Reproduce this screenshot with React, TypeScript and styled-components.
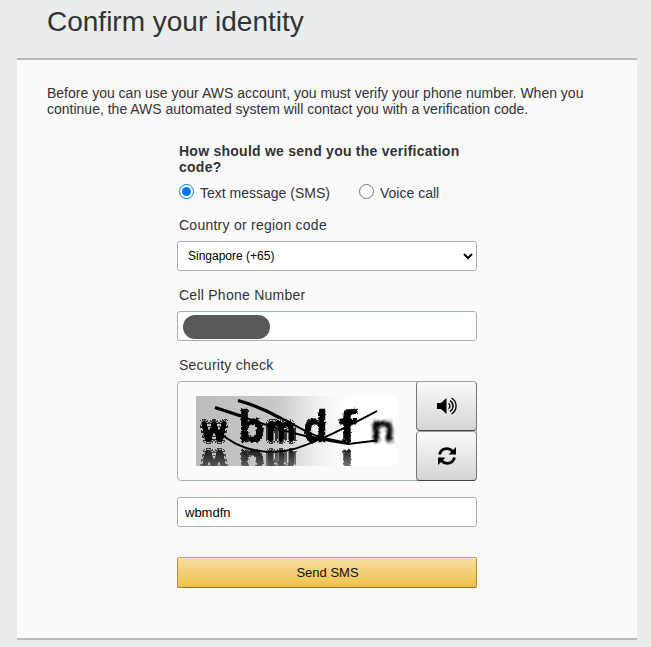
import React, { useState } from "react";
import styled, { createGlobalStyle, css } from "styled-components";

const GlobalStyle = createGlobalStyle`
  *, *::before, *::after { box-sizing: border-box; }
  body {
    margin: 0;
    background: #e9eded;
    color: #333;
    font-family: "Liberation Sans", Arial, Helvetica, sans-serif;
    font-size: 14px;
    line-height: 16px;
  }
`;

const Page = styled.main`
  height: 647px;
  overflow: hidden;
  padding: 0 14px 0 17px;
`;

const Title = styled.h1`
  height: 58px;
  margin: 0;
  padding: 5px 0 0 30px;
  font-size: 28px;
  line-height: 34px;
  font-weight: 400;
`;

const Panel = styled.section`
  height: 582px;
  padding: 25px 30px 0;
  background: #fafafa;
  border-top: 2px solid #b9b9b9;
  border-bottom: 2px solid #b9b9b9;
`;

const Intro = styled.p`
  margin: 0;
  white-space: nowrap;
`;

const Form = styled.form`
  display: flex;
  flex-direction: column;
  width: 300px;
  margin: 26px 0 0 130px;
`;

const Question = styled.h2`
  margin: 0;
  padding-left: 2px;
  font-size: 14px;
  line-height: 16px;
  font-weight: 700;
  letter-spacing: 0.25px;
`;

const Choices = styled.div`
  display: flex;
  height: 33px;
  margin-top: 9px;
  padding-left: 2px;
`;

const Choice = styled.label<{ $width?: number }>`
  display: flex;
  width: ${(p) => (p.$width ? `${p.$width}px` : "auto")};
  gap: 6px;
  white-space: nowrap;

  span { padding-top: 1px; }
`;

const Radio = styled.input`
  width: 15px;
  height: 15px;
  margin: 0;
`;

const FieldLabel = styled.label`
  height: 24px;
  padding-left: 2px;
  letter-spacing: 0.25px;
`;

const field = css`
  width: 300px;
  height: 30px;
  border: 1px solid #a2b3b1;
  border-radius: 3px;
  background: #fff;
  color: #000;
  font-family: "Liberation Sans", Arial, sans-serif;
  font-size: 12px;
  outline: none;
`;

const Select = styled.select`
  ${field}
  padding: 0 0 0 6px;
  margin-bottom: 16px;
`;

const PhoneField = styled.div`
  ${field}
  display: flex;
  align-items: center;
  padding: 1px 0 0 5px;
  margin-bottom: 16px;
`;

const Redaction = styled.span`
  width: 87px;
  height: 24px;
  border-radius: 12px;
  background: #58595b;
`;

const TextInput = styled.input`
  ${field}
  padding: 0 7px;
  margin: 16px 0 30px;
  font-size: 13px;
`;

const Captcha = styled.div`
  display: flex;
  width: 300px;
  height: 100px;
  border: 1px solid #a2b3b1;
  border-radius: 4px;
`;

const CaptchaPicture = styled.svg`
  display: block;
  flex: none;
  width: 200px;
  height: 70px;
  margin: 14px 20px 0 18px;
`;

const CaptchaActions = styled.div`
  display: flex;
  flex-direction: column;
  flex: none;
  margin: -1px -1px -1px 0;
`;

const CaptchaButton = styled.button`
  display: flex;
  align-items: center;
  justify-content: center;
  width: 61px;
  height: 50px;
  padding: 0 0 1px 1px;
  border: 1px solid;
  border-color: #a0a0a0 #777 #444 #777;
  border-radius: 4px;
  background: linear-gradient(#fafafa, #d5d5d5);
  color: #000;
`;

const Submit = styled.button`
  width: 300px;
  height: 31px;
  padding: 0 0 0 1px;
  border: 1px solid;
  border-color: #c79f42 #b68d2d #9c7724;
  border-radius: 2px;
  background: linear-gradient(#f7dda2, #f0c14b);
  box-shadow: inset 0 1px 0 rgba(255, 255, 255, 0.4);
  color: #111;
  font-family: "Liberation Sans", Arial, sans-serif;
  font-size: 13px;
`;

type Glyph = { char: string; x: number; width: number; size: number; effect: "ripple" | "rough" | "fuzz"; mirrored?: boolean };

const glyphs: Glyph[] = [
  { char: "w", x: 4, width: 28, size: 38, effect: "ripple", mirrored: true },
  { char: "b", x: 42, width: 27, size: 42, effect: "rough", mirrored: true },
  { char: "m", x: 70, width: 30, size: 37, effect: "ripple", mirrored: true },
  { char: "d", x: 107, width: 25, size: 42, effect: "rough" },
  { char: "f", x: 143, width: 18, size: 42, effect: "rough", mirrored: true },
  { char: "n", x: 174, width: 25, size: 38, effect: "fuzz" },
];

function CaptchaImage() {
  return (
    <CaptchaPicture viewBox="0 0 200 70" fontFamily="DejaVu Sans, sans-serif" fontWeight="700">
      <defs>
        <linearGradient id="paper">
          <stop offset="0" stopColor="#bcbcbc" />
          <stop offset="0.4" stopColor="#c8c8c8" />
          <stop offset="0.6" stopColor="#eee" />
          <stop offset="0.76" stopColor="#fff" />
        </linearGradient>
        <linearGradient id="fade" x1="0" y1="0" x2="0" y2="1">
          <stop offset="0" stopColor="#fff" />
          <stop offset="1" stopColor="#999" />
        </linearGradient>
        <mask id="mirrorMask">
          <rect y="52" width="200" height="18" fill="url(#fade)" />
        </mask>
        <filter id="rough" x="-30%" y="-20%" width="160%" height="140%">
          <feTurbulence type="fractalNoise" baseFrequency="0.5" numOctaves="2" seed="4" result="noise" />
          <feDisplacementMap in="SourceGraphic" in2="noise" scale="4" xChannelSelector="R" yChannelSelector="G" />
        </filter>
        <filter id="ripple" x="-40%" y="-20%" width="180%" height="140%">
          <feTurbulence type="fractalNoise" baseFrequency="0.3" numOctaves="1" seed="9" result="noise" />
          <feGaussianBlur in="SourceAlpha" stdDeviation="1.500" result="soft" />
          <feComponentTransfer in="soft" result="contours">
            <feFuncA type="discrete" tableValues="0 0.75 0 0.75 0 0.5 1 1 1 1 1 1" />
          </feComponentTransfer>
          <feDisplacementMap in="contours" in2="noise" scale="2" xChannelSelector="R" yChannelSelector="G" />
        </filter>
        <filter id="fuzz" x="-30%" y="-20%" width="160%" height="140%">
          <feTurbulence type="fractalNoise" baseFrequency="0.7" numOctaves="2" seed="7" result="noise" />
          <feDisplacementMap in="SourceGraphic" in2="noise" scale="9" xChannelSelector="R" yChannelSelector="G" />
          <feGaussianBlur stdDeviation="1" />
        </filter>
      </defs>
      <rect width="200" height="70" fill="url(#paper)" />
      <g mask="url(#mirrorMask)">
        <g transform="translate(0 100) scale(1 -1)" opacity="0.9">
          {glyphs.filter((g) => g.mirrored).map((g) => (
            <use key={g.char} href={`#glyph-${g.char}`} />
          ))}
        </g>
      </g>
      {glyphs.map((g) => (
        <text
          key={g.char}
          id={`glyph-${g.char}`}
          x={g.x}
          y={46}
          textLength={g.width}
          lengthAdjust="spacingAndGlyphs"
          fontSize={g.size}
          stroke="#000"
          strokeWidth={g.effect === "rough" ? 0.4 : 0}
          filter={`url(#${g.effect})`}
        >
          {g.char}
        </text>
      ))}
      <g fill="none" stroke="#000">
        <path d="M19 11.500L48 21" strokeWidth="3.400" />
        <path d="M46 20.500C75 31 104 41 152 48L181 44.500" strokeWidth="2" />
        <path d="M42 4.500C60 9.500 72 15 84 22" strokeWidth="3.200" />
        <path d="M82 20.500C98 28 112 38 127 42L152 47" strokeWidth="2" />
        <path d="M23 36C36 48 55 56 77 56C95 56 108 50 127 42C147 33 162 25 181 15" strokeWidth="1.900" />
      </g>
    </CaptchaPicture>
  );
}

function SpeakerIcon() {
  return (
    <svg width="20" height="18" viewBox="0 0 20 18" fill="none" stroke="#000" strokeWidth="1.400">
      <path d="M0 6h4l5.500-5v16L4 12H0z" fill="#000" stroke="none" />
      <path d="M11.500 6.300a3.300 3.300 0 0 1 0 5.400M13 3.600a6.300 6.300 0 0 1 0 10.800M14.500 1a9.300 9.300 0 0 1 0 16" />
    </svg>
  );
}

function RefreshIcon() {
  return (
    <svg width="20" height="20" viewBox="0 0 20 20" fill="none" stroke="#000" strokeWidth="2.800">
      <path d="M2.500 8.500C3.400 5 6.300 2.700 9.900 2.700c2.300 0 4.100.8 5.600 2.500M17.500 11.500c-.9 3.500-3.800 5.800-7.400 5.800-2.300 0-4.100-.8-5.600-2.500" />
      <path d="M19 1v7.500h-7.500zM1 19v-7.500h7.500z" fill="#000" stroke="none" />
    </svg>
  );
}

export default function App() {
  const [method, setMethod] = useState("sms");
  const [answer, setAnswer] = useState("wbmdfn");

  return (
    <>
      <GlobalStyle />
      <Page>
        <Title>Confirm your identity</Title>
        <Panel>
          <Intro>
            Before you can use your AWS account, you must verify your phone number. When you
            <br />
            continue, the AWS automated system will contact you with a verification code.
          </Intro>
          <Form onSubmit={(e) => e.preventDefault()}>
            <Question>
              How should we send you the verification
              <br />
              code?
            </Question>
            <Choices>
              <Choice $width={180}>
                <Radio type="radio" name="method" checked={method === "sms"} onChange={() => setMethod("sms")} />
                <span>Text message (SMS)</span>
              </Choice>
              <Choice>
                <Radio type="radio" name="method" checked={method === "voice"} onChange={() => setMethod("voice")} />
                <span>Voice call</span>
              </Choice>
            </Choices>
            <FieldLabel htmlFor="country">Country or region code</FieldLabel>
            <Select id="country" defaultValue="65">
              <option value="65">Singapore (+65)</option>
            </Select>
            <FieldLabel>Cell Phone Number</FieldLabel>
            <PhoneField>
              <Redaction />
            </PhoneField>
            <FieldLabel htmlFor="answer">Security check</FieldLabel>
            <Captcha>
              <CaptchaImage />
              <CaptchaActions>
                <CaptchaButton type="button" aria-label="Play audio">
                  <SpeakerIcon />
                </CaptchaButton>
                <CaptchaButton type="button" aria-label="Refresh">
                  <RefreshIcon />
                </CaptchaButton>
              </CaptchaActions>
            </Captcha>
            <TextInput id="answer" value={answer} onChange={(e) => setAnswer(e.target.value)} />
            <Submit type="submit">Send SMS</Submit>
          </Form>
        </Panel>
      </Page>
    </>
  );
}
